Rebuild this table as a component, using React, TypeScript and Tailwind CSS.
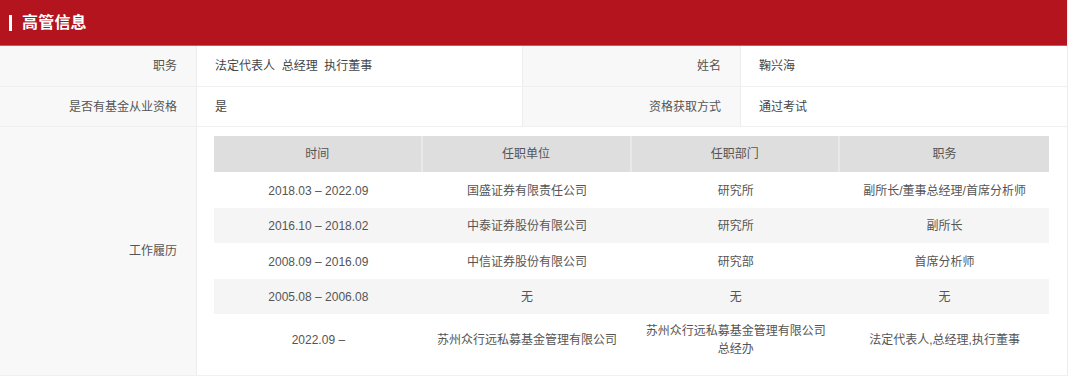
import React from 'react';

const font = { fontFamily: '"Liberation Sans", "Noto Sans CJK SC", sans-serif' };

interface Job {
  time: string;
  company: string;
  dept: string[];
  title: string;
}

const jobs: Job[] = [
  { time: '2018.03 – 2022.09', company: '国盛证券有限责任公司', dept: ['研究所'], title: '副所长/董事总经理/首席分析师' },
  { time: '2016.10 – 2018.02', company: '中泰证券股份有限公司', dept: ['研究所'], title: '副所长' },
  { time: '2008.09 – 2016.09', company: '中信证券股份有限公司', dept: ['研究部'], title: '首席分析师' },
  { time: '2005.08 – 2006.08', company: '无', dept: ['无'], title: '无' },
  { time: '2022.09 –', company: '苏州众行远私募基金管理有限公司', dept: ['苏州众行远私募基金管理有限公司', '总经办'], title: '法定代表人,总经理,执行董事' },
];

function Label({ children }: { children: React.ReactNode }) {
  return (
    <div className="bg-[#f8f8f8] border-r border-[#ededed] flex items-center justify-end pr-[19px] text-[12px] text-[#555]">
      {children}
    </div>
  );
}

function Value({ children }: { children: React.ReactNode }) {
  return (
    <div className="bg-white flex items-center pl-[18px] text-[12px] text-[#444] border-r border-[#ededed]">
      {children}
    </div>
  );
}

export default function App() {
  return (
    <div className="w-[1080px] h-[379px] bg-white overflow-hidden" style={font}>
      <div className="w-[1068px] border-r border-[#ededed]">
        <div className="h-[46px] bg-[#b4141e] border-b border-[#d0565c] flex items-center pl-[9px] gap-[10px]">
          <span className="w-[3px] h-[16px] bg-white" />
          <span className="text-white text-[16px] font-bold tracking-[0.2px]">高管信息</span>
        </div>

        <div className="grid grid-cols-[197px_326px_218px_1fr] h-[41px] border-b border-[#f0f0f0]">
          <Label>职务</Label>
          <Value>法定代表人&nbsp; 总经理&nbsp; 执行董事</Value>
          <Label>姓名</Label>
          <div className="bg-white flex items-center pl-[18px] text-[12px] text-[#444]">鞠兴海</div>
        </div>

        <div className="grid grid-cols-[197px_326px_218px_1fr] h-[40px] border-b border-[#f0f0f0]">
          <Label>是否有基金从业资格</Label>
          <Value>是</Value>
          <Label>资格获取方式</Label>
          <div className="bg-white flex items-center pl-[18px] text-[12px] text-[#444]">通过考试</div>
        </div>

        <div className="grid grid-cols-[197px_1fr] h-[249px] border-b border-[#f0f0f0]">
          <Label>工作履历</Label>
          <div className="pl-[17px] pr-[18px] pt-[9px]">
            <div className="grid grid-cols-4 h-[36px] bg-[#dedede] text-[12px] text-[#555]">
              {['时间', '任职单位', '任职部门', '职务'].map(h => (
                <div key={h} className="flex items-center justify-center bg-[#dedede] border-r-2 border-[#e9e9e9] last:border-r-0">
                  {h}
                </div>
              ))}
            </div>
            {jobs.map((job, i) => (
              <div
                key={job.time}
                className={`grid grid-cols-4 text-[12px] text-[#555] ${i % 2 === 1 ? 'bg-[#f5f5f5]' : 'bg-white'} ${job.dept.length > 1 ? 'h-[50px]' : 'h-[35.5px]'}`}
              >
                <div className="flex items-center justify-center pt-[2px]">{job.time}</div>
                <div className="flex items-center justify-center pt-[2px]">{job.company}</div>
                <div className="flex flex-col items-center justify-center leading-[18px] pt-[2px]">
                  {job.dept.map(d => (
                    <span key={d}>{d}</span>
                  ))}
                </div>
                <div className="flex items-center justify-center pt-[2px]">{job.title}</div>
              </div>
            ))}
          </div>
        </div>
      </div>
    </div>
  );
}
